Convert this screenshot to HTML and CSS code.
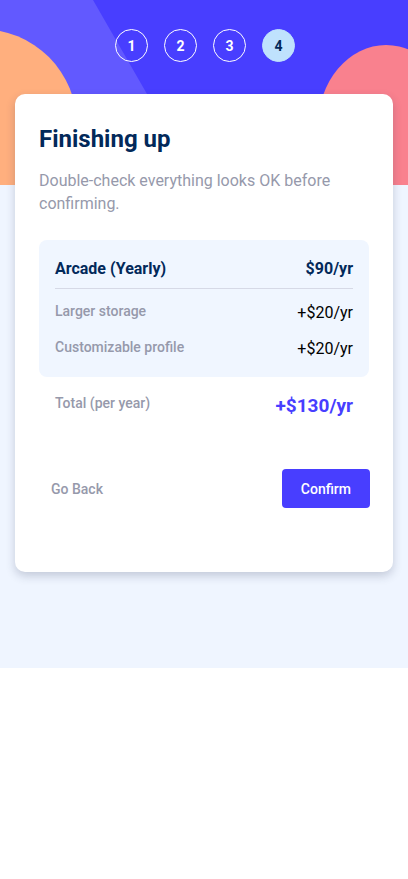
FILE: index.html
```html
<!DOCTYPE html>
<html lang="en">
<head>
<meta charset="utf-8">
<title>Multi-step form – Finishing up</title>
<link rel="stylesheet" href="styles.css">
</head>
<body>
<div class="page">
  <header class="hero">
    <svg class="hero-art" viewBox="0 0 408 185" preserveAspectRatio="none" aria-hidden="true">
      <rect width="408" height="185" fill="#483eff"/>
      <path d="M0 0 H93 L147 94 L200 185 H0 Z" fill="#6259ff"/>
      <circle cx="-19" cy="125" r="96" fill="#ffaf7e"/>
      <ellipse cx="386" cy="126" rx="68" ry="81" fill="#f9818e"/>
    </svg>
    <ol class="steps">
      <li class="step">1</li>
      <li class="step">2</li>
      <li class="step">3</li>
      <li class="step step--active">4</li>
    </ol>
  </header>

  <main class="card">
    <h1 class="title">Finishing up</h1>
    <p class="subtitle">Double-check everything looks OK before confirming.</p>

    <section class="summary">
      <div class="plan-row">
        <span class="plan-name">Arcade (Yearly)</span>
        <span class="plan-price">$90/yr</span>
      </div>
      <hr class="divider">
      <div class="addons">
        <div class="addon-row">
          <span class="addon-name">Larger storage</span>
          <span class="addon-price">+$20/yr</span>
        </div>
        <div class="addon-row">
          <span class="addon-name">Customizable profile</span>
          <span class="addon-price">+$20/yr</span>
        </div>
      </div>
    </section>

    <div class="total-row">
      <span class="total-label">Total (per year)</span>
      <span class="total-price">+$130/yr</span>
    </div>

    <div class="actions">
      <button class="btn-back" type="button">Go Back</button>
      <button class="btn-confirm" type="button">Confirm</button>
    </div>
  </main>
</div>
</body>
</html>
```

FILE: styles.css
```css
* {
  box-sizing: border-box;
}

html, body {
  margin: 0;
  padding: 0;
  background: #ffffff;
}

body {
  font-family: Roboto, "Noto Sans", Arial, sans-serif;
  color: #02295a;
}

.page {
  background: #eff5ff;
  padding-bottom: 96px;
}

.hero {
  position: relative;
  height: 185px;
  overflow: hidden;
}

.hero-art {
  position: absolute;
  top: 0;
  left: 0;
  width: 100%;
  height: 100%;
  display: block;
}

.steps {
  position: relative;
  list-style: none;
  margin: 0;
  padding: 29px 0 0 2px;
  display: flex;
  justify-content: center;
  gap: 16px;
}

.step {
  width: 33px;
  height: 33px;
  border: 1px solid #ffffff;
  border-radius: 50%;
  display: flex;
  align-items: center;
  justify-content: center;
  color: #ffffff;
  font-size: 14px;
  font-weight: 700;
}

.step--active {
  background: #bfe2fd;
  border-color: #bfe2fd;
  color: #02295a;
}

.card {
  position: relative;
  display: block;
  margin: -91px 15px 0;
  background: #ffffff;
  border-radius: 10px;
  box-shadow: 0 4px 10px rgba(40, 50, 80, 0.22);
  padding: 31px 23px 64px 24px;
}

.title {
  margin: 0;
  font-size: 24px;
  line-height: 28px;
  font-weight: 700;
  color: #02295a;
}

.subtitle {
  margin: 16px 0 0;
  font-size: 16px;
  line-height: 23px;
  color: #9699ab;
}

.summary {
  margin-top: 25px;
  margin-right: 1px;
  background: #f0f6ff;
  border-radius: 8px;
  padding: 16px 16px 16px 16px;
}

.plan-row {
  display: flex;
  justify-content: space-between;
  align-items: baseline;
  font-size: 16px;
  line-height: 26px;
  font-weight: 700;
  color: #02295a;
}

.divider {
  border: 0;
  border-top: 1px solid #d6d9e6;
  margin: 6px 0 0;
  height: 0;
}

.addons {
  display: flex;
  flex-direction: column;
  gap: 12px;
  margin-top: 12px;
}

.addon-row {
  display: flex;
  justify-content: space-between;
  align-items: flex-start;
}

.addon-name {
  font-size: 14px;
  line-height: 20px;
  font-weight: 500;
  color: #9699ab;
}

.addon-price {
  font-size: 16px;
  line-height: 24px;
  color: #000000;
}

.total-row {
  display: flex;
  justify-content: space-between;
  align-items: flex-start;
  margin-top: 16px;
  padding: 0 17px 0 16px;
}

.total-label {
  font-size: 14px;
  line-height: 20px;
  font-weight: 500;
  color: #9699ab;
}

.total-price {
  font-size: 19px;
  line-height: 26px;
  font-weight: 700;
  color: #483eff;
}

.actions {
  display: flex;
  justify-content: space-between;
  align-items: center;
  margin-top: 50px;
}

.btn-back {
  font-family: inherit;
  border: 0;
  background: transparent;
  padding: 0 12px;
  font-size: 14px;
  font-weight: 500;
  color: #9699ab;
  height: 39px;
}

.btn-confirm {
  font-family: inherit;
  border: 0;
  background: #483eff;
  color: #ffffff;
  border-radius: 4px;
  height: 39px;
  padding: 0 19px;
  font-size: 14px;
  font-weight: 500;
}
```
